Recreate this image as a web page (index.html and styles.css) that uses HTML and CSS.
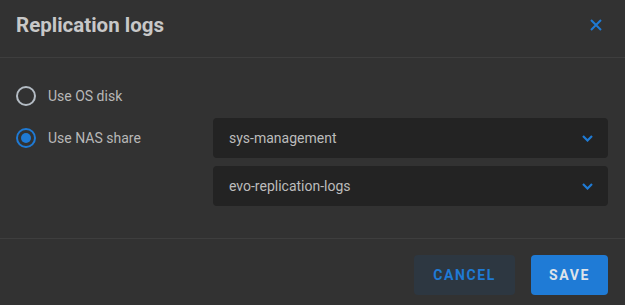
FILE: index.html
```html
<!DOCTYPE html>
<html lang="en">
<head>
  <meta charset="UTF-8" />
  <meta name="viewport" content="width=device-width, initial-scale=1.0" />
  <title>Replication logs</title>
  <link rel="stylesheet" href="styles.css">
</head>
<body>
  <div class="dialog">
    <header class="dialog-header">
      <h1>Replication logs</h1>
      <button class="close" aria-label="Close">
        <svg width="12" height="12" viewBox="0 0 12 12"><path d="M1 1 L11 11 M11 1 L1 11" stroke="#1f7ad4" stroke-width="2" fill="none"/></svg>
      </button>
    </header>

    <!-- Options -->
    <div class="dialog-body">
      <label class="option">
        <span class="radio"></span>
        <span>Use OS disk</span>
      </label>
      <div class="nas-row">
        <label class="option">
          <span class="radio checked"></span>
          <span>Use NAS share</span>
        </label>
        <div class="selects">
          <div class="select">
            <span>sys-management</span>
            <svg width="11" height="7" viewBox="0 0 11 7"><path d="M1 1 L5.5 5.5 L10 1" stroke="#1f7ad4" stroke-width="2.2" fill="none"/></svg>
          </div>
          <div class="select">
            <span>evo-replication-logs</span>
            <svg width="11" height="7" viewBox="0 0 11 7"><path d="M1 1 L5.5 5.5 L10 1" stroke="#1f7ad4" stroke-width="2.2" fill="none"/></svg>
          </div>
        </div>
      </div>
    </div>

    <footer class="dialog-footer">
      <button class="btn btn-cancel">Cancel</button>
      <button class="btn btn-save">Save</button>
    </footer>
  </div>
</body>
</html>
```

FILE: styles.css
```css
/* Reset */
* { box-sizing: border-box; margin: 0; padding: 0; }
body { font-family: Roboto, "Liberation Sans", sans-serif; background: #323232; color: #bbb; }

/* Header */
.dialog-header { height: 58px; padding: 11px 17px 0 16px; display: flex; justify-content: space-between; align-items: flex-start; border-bottom: 1px solid #3e3e3e; }
.dialog-header h1 { font-size: 20.5px; font-weight: 700; line-height: 28px; color: #c8c8c8; }
.close { background: none; border: none; width: 24px; height: 28px; display: flex; align-items: center; justify-content: flex-end; padding-right: 6px; cursor: pointer; }

/* Body */
.dialog-body { padding: 18px 17px 32px 16px; border-bottom: 1px solid #3e3e3e; }
.option { display: flex; align-items: center; gap: 12px; height: 40px; font-size: 14px; color: #b8b8b8; }
.radio { width: 20px; height: 20px; border: 2px solid #b4bcc4; border-radius: 50%; display: flex; align-items: center; justify-content: center; }
.radio.checked { border-color: #1f7ad4; }
.radio.checked::after { content: ""; width: 10px; height: 10px; border-radius: 50%; background: #1f7ad4; }

.nas-row { display: flex; margin-top: 2px; }
.nas-row .option { width: 197px; flex-shrink: 0; }
.selects { flex: 1; display: flex; flex-direction: column; gap: 8px; }
.select { height: 40px; background: #232323; border-radius: 4px; display: flex; align-items: center; justify-content: space-between; padding: 0 15px 0 16px; font-size: 14px; color: #bcbcbc; }

/* Footer */
.dialog-footer { display: flex; justify-content: flex-end; gap: 16px; padding: 16px 17px 10px; }
.btn { height: 40px; border: none; border-radius: 4px; font-family: inherit; font-size: 14px; font-weight: 700; letter-spacing: 1.6px; text-transform: uppercase; cursor: pointer; }
.btn-cancel { width: 101px; background: #2d3741; color: #1f7ad4; }
.btn-save { width: 77px; background: #1f7bd6; color: #dde3ea; }
```
